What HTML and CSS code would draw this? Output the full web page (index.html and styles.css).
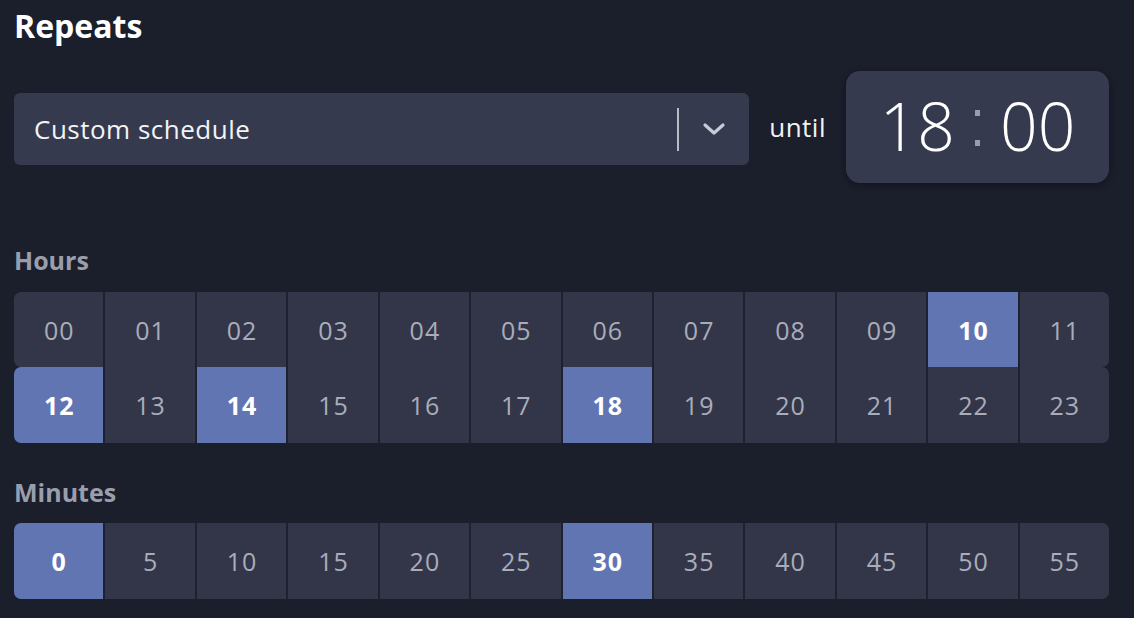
FILE: index.html
```html
<!DOCTYPE html>
<html lang="en">
<head>
<meta charset="utf-8">
<title>Repeats</title>
<link rel="stylesheet" href="styles.css">
</head>
<body>
<main class="panel">
  <h1 class="title">Repeats</h1>
  <div class="repeat-row">
    <div class="select">
      <span class="select-value">Custom schedule</span>
      <span class="select-divider"></span>
      <svg class="chevron" width="24" height="14" viewBox="0 0 24 14"><polyline points="3,3 12,11 21,3" fill="none" stroke="#c9ccd6" stroke-width="3.2" stroke-linecap="round" stroke-linejoin="round"/></svg>
    </div>
    <span class="until">until</span>
    <div class="time">
      <span class="time-part">18</span>
      <span class="colon"><i></i><i></i></span>
      <span class="time-part">00</span>
    </div>
  </div>

  <h2 class="label label-hours">Hours</h2>
  <div class="grid">
    <div class="grid-row">
      <span class="cell">00</span><span class="cell">01</span><span class="cell">02</span><span class="cell">03</span><span class="cell">04</span><span class="cell">05</span><span class="cell">06</span><span class="cell">07</span><span class="cell">08</span><span class="cell">09</span><span class="cell on">10</span><span class="cell">11</span>
    </div>
    <div class="grid-row row-b">
      <span class="cell on">12</span><span class="cell">13</span><span class="cell on">14</span><span class="cell">15</span><span class="cell">16</span><span class="cell">17</span><span class="cell on">18</span><span class="cell">19</span><span class="cell">20</span><span class="cell">21</span><span class="cell">22</span><span class="cell">23</span>
    </div>
  </div>

  <h2 class="label label-minutes">Minutes</h2>
  <div class="grid">
    <div class="grid-row row-b">
      <span class="cell on">0</span><span class="cell">5</span><span class="cell">10</span><span class="cell">15</span><span class="cell">20</span><span class="cell">25</span><span class="cell on">30</span><span class="cell">35</span><span class="cell">40</span><span class="cell">45</span><span class="cell">50</span><span class="cell">55</span>
    </div>
  </div>
</main>
</body>
</html>
```

FILE: styles.css
```css
* { box-sizing: border-box; }
html, body {
  margin: 0;
  padding: 0;
  background: #1b1e2b;
  width: 1134px;
  height: 618px;
  overflow: hidden;
}
body {
  font-family: "Open Sans", Lato, "Liberation Sans", sans-serif;
  color: #ffffff;
}
.panel {
  padding: 0 25px 0 14px;
}
.title {
  margin: 0;
  padding-top: 6px;
  font-size: 32px;
  line-height: 40px;
  font-weight: 700;
  color: #ffffff;
}
.repeat-row {
  display: flex;
  align-items: center;
  margin-top: 25px;
  height: 112px;
}
.select {
  flex: 1;
  height: 72px;
  margin-top: 4px;
  background: #363a4e;
  border-radius: 6px;
  display: flex;
  align-items: center;
  padding: 0 23px 0 20px;
}
.select-value {
  flex: 1;
  font-size: 26px;
  letter-spacing: 0.5px;
  color: #f2f3f6;
}
.select-divider {
  width: 2px;
  height: 43px;
  background: #b9bcc6;
  margin-right: 23px;
}
.chevron { display: block; }
.until {
  margin: 0 20px;
  font-size: 26px;
  letter-spacing: 0.5px;
  color: #f2f3f6;
}
.time {
  width: 263px;
  height: 112px;
  background: #363a4e;
  border-radius: 14px;
  box-shadow: 0 2px 6px rgba(0,0,0,0.35);
  display: flex;
  align-items: center;
  justify-content: center;
  padding-bottom: 4px;
}
.time-part {
  font-size: 66px;
  font-weight: 300;
  color: #ffffff;
  line-height: 1;
}
.colon {
  display: flex;
  flex-direction: column;
  gap: 24px;
  margin: 6px 20px 0;
}
.colon i {
  display: block;
  width: 5px;
  height: 6px;
  background: #9a9dab;
}
.label {
  margin: 0;
  font-size: 25px;
  font-weight: 700;
  color: #9a9eac;
  line-height: 30px;
}
.label-hours { margin-top: 62px; }
.label-minutes { margin-top: 34px; }
.grid {
  margin-top: 17px;
}
.label-minutes + .grid { margin-top: 16px; }
.grid-row {
  display: flex;
  gap: 2px;
  height: 75px;
  border-radius: 7px;
  overflow: hidden;
  background: #1e2130;
}
.grid-row.row-b { height: 76px; }
.cell {
  flex: 1;
  display: flex;
  align-items: center;
  justify-content: center;
  background: #333649;
  font-size: 25px;
  letter-spacing: 1px;
  text-indent: 1px;
  color: #a9adba;
}
.cell.on {
  background: #6275b3;
  color: #ffffff;
  font-weight: 700;
}
```
